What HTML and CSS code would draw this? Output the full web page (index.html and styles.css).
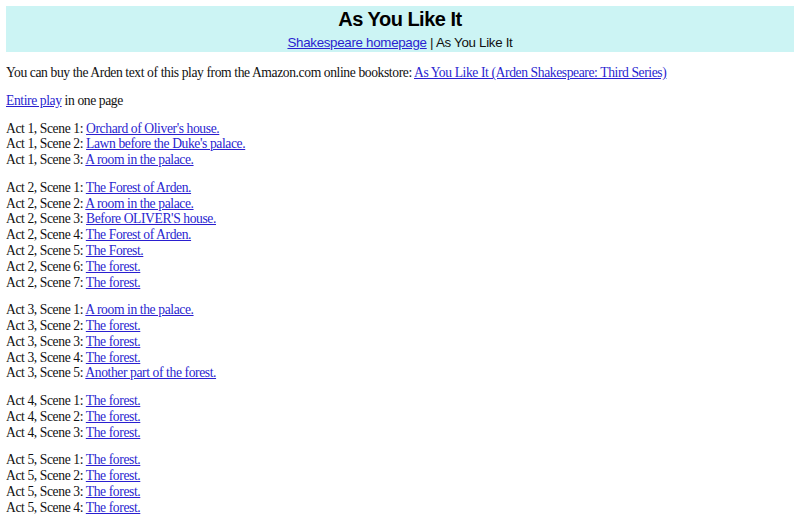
FILE: index.html
```html
<!DOCTYPE html>
<html>
<head>
<meta charset="utf-8">
<title>As You Like It: List of Scenes</title>
<link rel="stylesheet" href="styles.css">
</head>
<body>
<div class="header">
  <div class="title">As You Like It</div>
  <div class="crumbs"><a href="#">Shakespeare homepage</a> | As You Like It</div>
</div>

<p>You can buy the Arden text of this play from the Amazon.com online bookstore: <a href="#">As You Like It (Arden Shakespeare: Third Series)</a></p>

<p><a href="#">Entire play</a> in one page</p>

<p>Act 1, Scene 1: <a href="#">Orchard of Oliver's house.</a><br>
Act 1, Scene 2: <a href="#">Lawn before the Duke's palace.</a><br>
Act 1, Scene 3: <a href="#">A room in the palace.</a></p>

<p>Act 2, Scene 1: <a href="#">The Forest of Arden.</a><br>
Act 2, Scene 2: <a href="#">A room in the palace.</a><br>
Act 2, Scene 3: <a href="#">Before OLIVER'S house.</a><br>
Act 2, Scene 4: <a href="#">The Forest of Arden.</a><br>
Act 2, Scene 5: <a href="#">The Forest.</a><br>
Act 2, Scene 6: <a href="#">The forest.</a><br>
Act 2, Scene 7: <a href="#">The forest.</a></p>

<p>Act 3, Scene 1: <a href="#">A room in the palace.</a><br>
Act 3, Scene 2: <a href="#">The forest.</a><br>
Act 3, Scene 3: <a href="#">The forest.</a><br>
Act 3, Scene 4: <a href="#">The forest.</a><br>
Act 3, Scene 5: <a href="#">Another part of the forest.</a></p>

<p>Act 4, Scene 1: <a href="#">The forest.</a><br>
Act 4, Scene 2: <a href="#">The forest.</a><br>
Act 4, Scene 3: <a href="#">The forest.</a></p>

<p>Act 5, Scene 1: <a href="#">The forest.</a><br>
Act 5, Scene 2: <a href="#">The forest.</a><br>
Act 5, Scene 3: <a href="#">The forest.</a><br>
Act 5, Scene 4: <a href="#">The forest.</a></p>
</body>
</html>
```

FILE: styles.css
```css
html, body {
  background: #ffffff;
}
body {
  margin: 6px 6px;
  font-family: "Liberation Serif", "Times New Roman", serif;
  font-size: 13.6px;
  line-height: 15.8px;
  letter-spacing: -0.4px;
  color: #111111;
}
a {
  color: #2a1fd0;
  text-decoration: underline;
}
.header {
  background: #ccf4f4;
  text-align: center;
  font-family: "Liberation Sans", Arial, sans-serif;
  padding: 1px 2px 1px;
  margin-bottom: 13.4px;
}
.title {
  font-size: 20px;
  font-weight: bold;
  line-height: 24px;
  letter-spacing: -0.5px;
  color: #000;
}
.crumbs {
  font-size: 13.33px;
  line-height: 17px;
  margin-top: 3px;
  letter-spacing: -0.3px;
  color: #111;
}
p {
  margin: 11.8px 0;
}
```
